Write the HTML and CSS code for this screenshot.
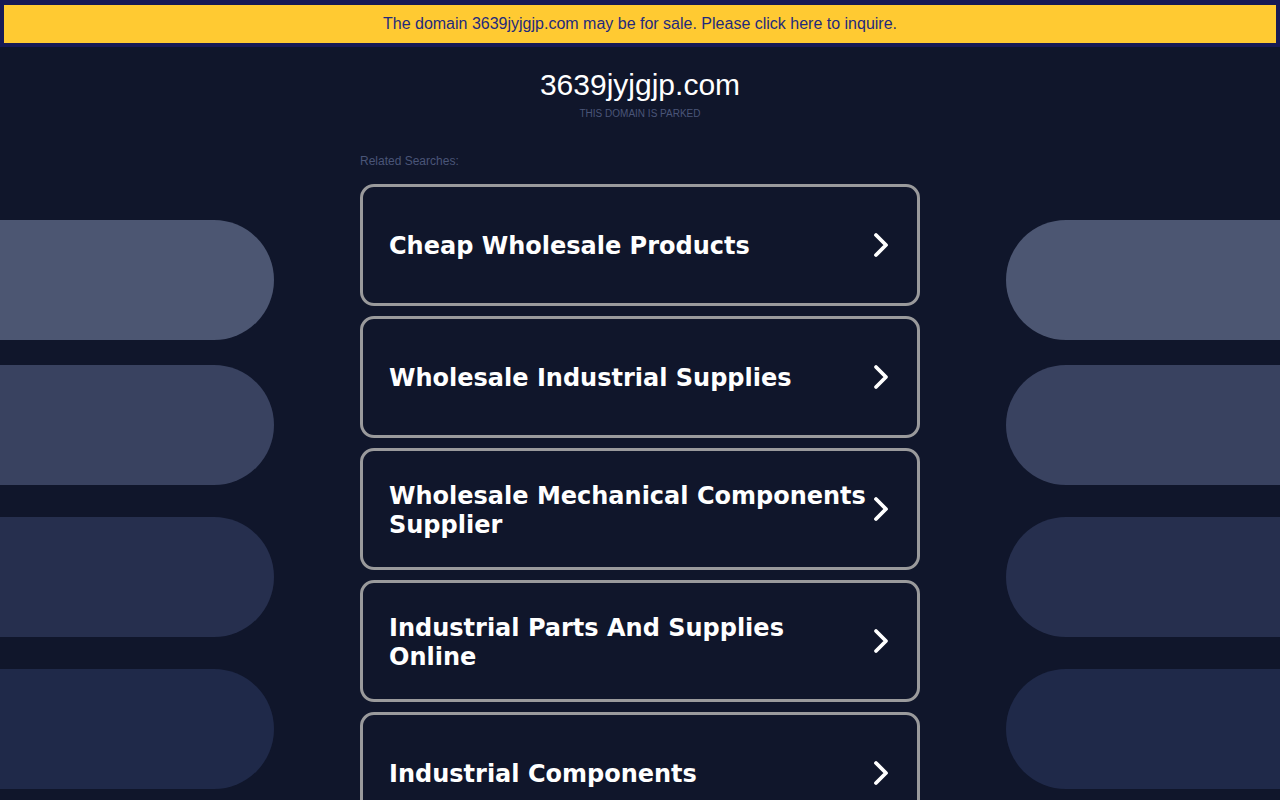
FILE: index.html
```html
<!DOCTYPE html>
<html>
<head>
<meta charset="utf-8">
<title>3639jyjgjp.com</title>
<link rel="stylesheet" href="styles.css">
</head>
<body>
<div class="deco deco-left">
  <div class="pill p1"></div>
  <div class="pill p2"></div>
  <div class="pill p3"></div>
  <div class="pill p4"></div>
</div>
<div class="deco deco-right">
  <div class="pill p1"></div>
  <div class="pill p2"></div>
  <div class="pill p3"></div>
  <div class="pill p4"></div>
</div>
<div class="topbar"><a class="sale" href="#">The domain 3639jyjgjp.com may be for sale. Please click here to inquire.</a></div>
<header class="head">
  <h1 class="domain">3639jyjgjp.com</h1>
  <div class="parked">THIS DOMAIN IS PARKED</div>
</header>
<main class="main">
  <div class="related">Related Searches:</div>
  <div class="list">
    <a class="card" href="#"><span class="label">Cheap Wholesale Products</span><svg class="chev" viewBox="0 0 20 28" width="20" height="28"><path d="M5 4 L15 14 L5 24" fill="none" stroke="#fff" stroke-width="3.8" stroke-linecap="round" stroke-linejoin="round"/></svg></a>
    <a class="card" href="#"><span class="label">Wholesale Industrial Supplies</span><svg class="chev" viewBox="0 0 20 28" width="20" height="28"><path d="M5 4 L15 14 L5 24" fill="none" stroke="#fff" stroke-width="3.8" stroke-linecap="round" stroke-linejoin="round"/></svg></a>
    <a class="card" href="#"><span class="label">Wholesale Mechanical Components Supplier</span><svg class="chev" viewBox="0 0 20 28" width="20" height="28"><path d="M5 4 L15 14 L5 24" fill="none" stroke="#fff" stroke-width="3.8" stroke-linecap="round" stroke-linejoin="round"/></svg></a>
    <a class="card" href="#"><span class="label">Industrial Parts And Supplies Online</span><svg class="chev" viewBox="0 0 20 28" width="20" height="28"><path d="M5 4 L15 14 L5 24" fill="none" stroke="#fff" stroke-width="3.8" stroke-linecap="round" stroke-linejoin="round"/></svg></a>
    <a class="card" href="#"><span class="label">Industrial Components</span><svg class="chev" viewBox="0 0 20 28" width="20" height="28"><path d="M5 4 L15 14 L5 24" fill="none" stroke="#fff" stroke-width="3.8" stroke-linecap="round" stroke-linejoin="round"/></svg></a>
  </div>
</main>
</body>
</html>
```

FILE: styles.css
```css
html, body {
  margin: 0;
  padding: 0;
  background: #10162b;
  overflow: hidden;
  height: 800px;
}
body {
  font-family: "Liberation Sans", Arial, sans-serif;
  position: relative;
}
.deco {
  position: absolute;
  top: 220px;
  width: 274px;
}
.deco-left { left: 0; }
.deco-right { right: 0; }
.pill {
  height: 120px;
  margin-bottom: 25px;
}
.pill.p2 { margin-bottom: 32px; }
.pill.p3 { margin-bottom: 32px; }
.deco-left .pill { border-radius: 0 60px 60px 0; }
.deco-right .pill { border-radius: 60px 0 0 60px; }
.p1 { background: #4c5672; }
.p2 { background: #394260; }
.p3 { background: #262f4e; }
.p4 { background: #1f2949; }

.topbar {
  position: relative;
  background: #171a55;
  padding: 5px 4px 4px 4px;
}
.sale {
  display: block;
  background: #ffca32;
  color: #1f2a7c;
  text-decoration: none;
  text-align: center;
  font-size: 16px;
  line-height: 38px;
  height: 38px;
}
.head {
  text-align: center;
  padding-top: 21px;
}
.domain {
  margin: 0;
  color: #ffffff;
  font-weight: normal;
  font-size: 30px;
  line-height: 34px;
}
.parked {
  color: #4a5578;
  font-size: 10px;
  line-height: 12px;
  margin-top: 6px;
}
.main {
  position: relative;
  width: 560px;
  margin: 0 auto;
  padding-top: 34px;
}
.related {
  color: #4a5578;
  font-size: 12px;
  line-height: 14px;
  margin-bottom: 16px;
}
.list {
  display: flex;
  flex-direction: column;
  gap: 10px;
}
.card {
  box-sizing: border-box;
  height: 122px;
  border: 3px solid #9a9a9c;
  border-radius: 14px;
  display: flex;
  align-items: center;
  justify-content: space-between;
  padding: 0 26px 0 26px;
  text-decoration: none;
  color: #ffffff;
}
.label {
  font-family: "DejaVu Sans", Verdana, sans-serif;
  font-weight: bold;
  font-size: 24px;
  line-height: 29px;
  max-width: 480px;
  padding-top: 3px;
}
.chev {
  flex: none;
}
```
